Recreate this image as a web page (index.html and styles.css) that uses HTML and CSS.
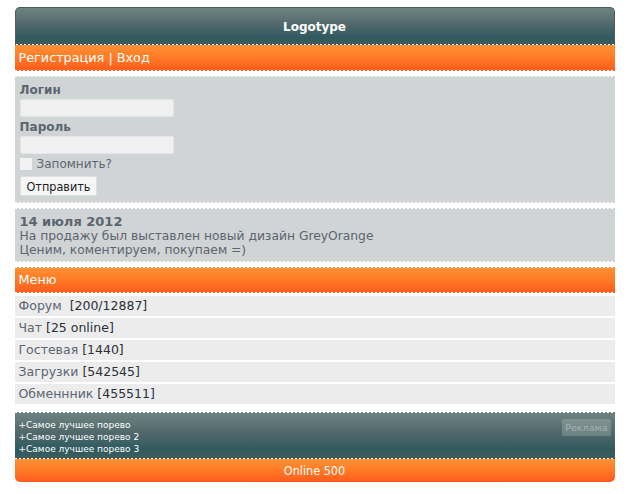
FILE: index.html
```html
<html>
    <head>
        <meta charset="utf-8">
        <link rel="stylesheet" href="styles.css">
    </head>
    <body>
        <div class="wrap">
            <div class="header">Logotype</div>
            <div class="bar"><a href="#">Регистрация</a> | <a href="#">Вход</a></div>
            <div class="box login">
                <label class="caption">Логин</label>
                <input class="field" type="text">
                <label class="caption">Пароль</label>
                <input class="field" type="password">
                <label class="remember"><span class="check"></span>Запомнить?</label>
                <button class="send">Отправить</button>
            </div>
            <div class="box news">
                <div class="date">14 июля 2012</div>
                <div>На продажу был выставлен новый дизайн GreyOrange</div>
                <div>Ценим, коментируем, покупаем =)</div>
            </div>
            <div class="bar menu-title">Меню</div>
            <div class="menu">
                <div class="row"><a href="#">Форум</a>&nbsp; <span>[200/12887]</span></div>
                <div class="row"><a href="#">Чат</a> <span>[25 online]</span></div>
                <div class="row"><a href="#">Гостевая</a> <span>[1440]</span></div>
                <div class="row"><a href="#">Загрузки</a> <span>[542545]</span></div>
                <div class="row"><a href="#">Обменнник</a> <span>[455511]</span></div>
            </div>
            <div class="ads">
                <div class="links">
                    <div>+Самое лучшее порево</div>
                    <div>+Самое лучшее порево 2</div>
                    <div>+Самое лучшее порево 3</div>
                </div>
                <span class="tag">Реклама</span>
            </div>
            <div class="footer">Online 500</div>
        </div>
    </body>
</html>
```
FILE: styles.css
```css
body{
    margin: 0;
    font-family: "DejaVu Sans", Verdana, sans-serif;
    font-size: 12px;
}
a{
    color: inherit;
    text-decoration: none;
}
.wrap{
    width: 600px;
    margin: 7px auto 0;
}
.header{
    height: 37px;
    line-height: 38px;
    border: 1px solid #4d5b5e;
    border-bottom: none;
    border-radius: 5px 5px 0 0;
    background:
        repeating-linear-gradient(90deg, #fff 0 2px, transparent 2px 4px) bottom/100% 1px no-repeat,
        linear-gradient(#6e8383, #51686b 45%, #2f5a5f 80%, #3f5b5e);
    color: #fff;
    font-weight: bold;
    font-size: 12px;
    text-align: center;
}
.bar{
    height: 26px;
    line-height: 26px;
    padding-left: 4px;
    background:
        repeating-linear-gradient(90deg, #fff 0 2px, transparent 2px 4px) bottom/100% 1px no-repeat,
        linear-gradient(#ff9135, #ff7a25 50%, #ff5a1c);
    color: #fff;
    font-size: 12.8px;
}
.menu-title{
    margin-top: 5px;
    background:
        repeating-linear-gradient(90deg, #fff 0 2px, transparent 2px 4px) top/100% 1px no-repeat,
        repeating-linear-gradient(90deg, #fff 0 2px, transparent 2px 4px) bottom/100% 1px no-repeat,
        linear-gradient(#ff9135, #ff7a25 50%, #ff5a1c);
}
.box{
    margin-top: 5px;
    padding: 7px 5px 7px;
    background:
        repeating-linear-gradient(90deg, #fff 0 2px, transparent 2px 4px) top/100% 1px no-repeat,
        repeating-linear-gradient(90deg, #fff 0 2px, transparent 2px 4px) bottom/100% 1px no-repeat,
        #d1d4d5;
    color: #5b6570;
}
.login{
    display: flex;
    flex-direction: column;
    align-items: flex-start;
    height: 113px;
}
.caption{
    font-weight: bold;
    height: 15px;
    line-height: 15px;
}
.field{
    box-sizing: border-box;
    width: 154px;
    height: 18px;
    margin: 1px 0 3px;
    border: 1px solid #e4e6e7;
    border-radius: 2px;
    background: #f0f0f0;
}
.remember{
    display: flex;
    align-items: center;
    gap: 5px;
    height: 14px;
}
.check{
    width: 12px;
    height: 12px;
    background: #f2f2f2;
}
.send{
    margin-top: 5px;
    height: 20px;
    padding: 0 6px;
    border: 1px solid #e0e0e0;
    border-radius: 2px;
    background: #f6f6f6;
    color: #222;
    font-family: "DejaVu Sans Condensed", "DejaVu Sans", sans-serif;
    font-size: 12.5px;
}
.news{
    height: 44px;
    padding: 6px 5px 4px;
    font-size: 12.3px;
    line-height: 14px;
}
.date{
    font-weight: bold;
    font-size: 13px;
    line-height: 15px;
}
.menu{
    padding: 3px 0 6px;
    background:
        repeating-linear-gradient(90deg, #fff 0 2px, transparent 2px 4px) bottom/100% 1px no-repeat,
        #fff;
}
.row{
    height: 20px;
    line-height: 20px;
    margin-bottom: 2px;
    padding-left: 4px;
    background: #ececec;
    color: #5b6570;
    font-size: 12.5px;
}
.row span{
    color: #2b3038;
}
.ads{
    display: flex;
    justify-content: space-between;
    align-items: flex-start;
    height: 35px;
    padding: 7px 4px 5px;
    background:
        repeating-linear-gradient(90deg, #fff 0 2px, transparent 2px 4px) top/100% 1px no-repeat,
        repeating-linear-gradient(90deg, #fff 0 2px, transparent 2px 4px) bottom/100% 1px no-repeat,
        linear-gradient(#6e8383, #51686b 45%, #2f5a5f 80%, #3f5b5e);
    color: #fff;
    font-size: 9px;
    line-height: 12px;
}
.tag{
    height: 17px;
    line-height: 17px;
    padding: 0 3px;
    border-radius: 2px;
    background: rgba(255, 255, 255, 0.18);
    color: #a9b3b3;
    font-size: 9.5px;
}
.footer{
    height: 23px;
    line-height: 23px;
    border-radius: 0 0 5px 5px;
    background: linear-gradient(#ff9135, #ff7a25 50%, #ff5a1c);
    color: #fff;
    text-align: center;
    font-family: "DejaVu Sans Condensed", "DejaVu Sans", sans-serif;
    font-size: 12.5px;
}
```
